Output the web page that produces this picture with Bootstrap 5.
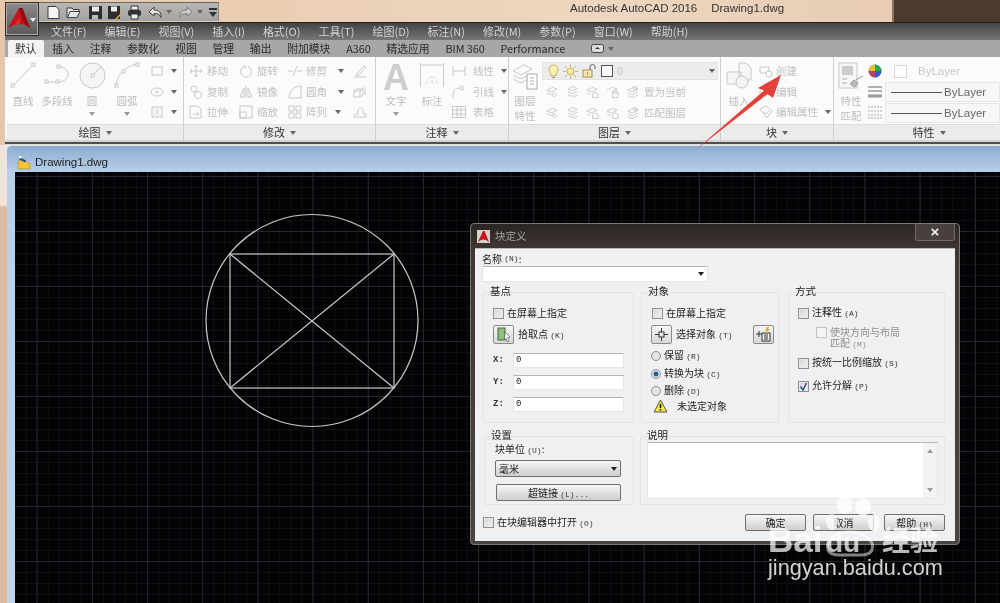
<!doctype html>
<html lang="zh">
<head>
<meta charset="utf-8">
<title>AutoCAD 2016 块定义</title>
<link href="https://cdn.jsdelivr.net/npm/bootstrap@5.3.0/dist/css/bootstrap.min.css" rel="stylesheet">
<style>
html,body{margin:0;height:603px;overflow:hidden;background:#000}
.cad{width:1000px;height:603px;position:relative;overflow:hidden;background:#e6c6aa;font-family:"Noto Sans CJK SC","Liberation Sans",sans-serif;font-size:11px;line-height:14px;filter:blur(.4px)}
.defs{width:0;height:0;position:absolute}
.topbar{height:22px;background:linear-gradient(90deg,#e8c7aa,#ecd3bb 45%,#eed6c0 60%,#e8cdb4 88%)}
.qat{flex:none;margin:2px 0 1px 38px;width:181px;background:linear-gradient(#b9b6b3,#a5a3a1);border-top:1px solid #666;border-right:1px solid #888;padding-left:8px;color:#3c3c3c}
.qat svg{display:block;flex:none;width:15px;height:15px}
.qg3{margin-left:3px}.qg4{margin-left:4px}.qg5{margin-left:5px}.qg6{margin-left:6px}.qg7{margin-left:7px}
.wintitle{color:#333;margin-left:351px;font-size:11.5px;gap:14px;font-family:"Liberation Sans","Noto Sans",sans-serif;padding-top:1px;white-space:nowrap}
.darkend{flex:none;width:108px;margin-left:auto;background:#4b3a2d;border-left:2px solid #8d7660}
.appbtn{position:absolute;left:5px;top:2px;width:34px;height:34px;background:linear-gradient(#8a8a8a,#5a5a5a);border:1px solid #2f2f2f;box-shadow:inset 0 0 0 1px #a9a9a9}
.tri{display:inline-block;flex:none;width:0;height:0;border-left:3px solid transparent;border-right:3px solid transparent;border-top:4px solid #666}
.tri.lt{border-top-color:#999}
.tri.wh{border-top-color:#eee;border-left-width:3.5px;border-right-width:3.5px;position:absolute;left:24px;top:15px}
.menurow{height:18px;margin-left:5px;background:linear-gradient(#434343,#767676);border-top:1px solid #222;padding-left:46px;gap:18px;color:#d4d4d4;line-height:17px}
.tabrow{height:17px;margin-left:5px;background:#a7a7a7;padding-left:10px;gap:15.750px;color:#2b2b2b;line-height:17px;font-size:10.8px}
.tabon{background:#f3f3f3;margin-left:-7px;margin-right:-7px;padding:0 7px;border-radius:2px 2px 0 0}
.tabico{margin-left:10px}
.ribbon{height:83px;margin-left:5px;padding-left:2px;background:#fbfbfb}
.pan{border-right:1px solid #cfcfcf;height:83px}
.p1{width:177px}.p2{width:192px}.p3{width:133px}.p4{width:212px}.p5{width:113px}.p6{flex:1;border-right:0}
.panbody{height:67px;padding-top:4px;color:#bdbdbd;font-size:10.5px}
.panfoot{height:16px;background:#ebebeb;border-top:1px solid #dedede;color:#333;gap:5px;font-size:11px;line-height:15px}
.bt{flex:none;height:63px}
.w32{width:32px}.w34{width:34px}.w36{width:36px}.w40{width:40px}
.bticon{height:32px;color:#c8c8c8}
.bticon svg{display:block;margin-top:1px}
.btlab{height:15px;line-height:15px;white-space:nowrap}
.btlab2{line-height:15px;text-align:center}
.bigA{font:700 36px/30px "Liberation Sans",sans-serif;color:#cdcdcd;padding-top:2px}
.sc{flex:none}
.sr{height:20.5px;white-space:nowrap;color:#bfbfbf}
.sr svg{flex:none;width:14px;height:14px;color:#c8c8c8}
.g4{gap:4px}.g3{gap:3px}.g7{gap:7px}
.c49{width:49px}.c50{width:50px}.c65{width:65px}
.pl5{padding-left:5px}.pl4{padding-left:4px}.pl2{padding-left:2px}
.ml11{margin-left:7px}
.laycol{width:176px;margin-left:1px}
.laydd{height:18px;margin:1px 0 2px;background:#ececec;border:1px solid #e2e2e2;padding:0 2px 0 5px;gap:4px;color:#c4c4c4}
.laydd svg{display:block}
.yr{height:20.5px;padding-left:4px;color:#bfbfbf}
.yr svg{width:13px;height:14px;flex:none;color:#c8c8c8}
.yr span{margin-left:-2px;white-space:nowrap}
.prop{flex:1;margin-left:3px}
.propr{height:20px;background:#f7f7f7;border:1px solid #e6e6e6;margin-bottom:1px;padding-left:5px;color:#666;font:11.5px/18px "Liberation Sans",sans-serif;white-space:nowrap}
.propr.flat{background:#fbfbfb;border-color:transparent;color:#c6c6c6;padding-left:8px}
.swatch{width:13px;height:13px;background:#fff;border:1px solid #d8d8d8;margin-right:11px}
.ll{width:51px;height:1px;background:#555;flex:none;margin-right:2px}
.sep{height:5px;margin-left:5px;background:linear-gradient(#d4d4d4 0,#d4d4d4 2px,#4e4e4e 2px,#4e4e4e 4px,#ddd 4px)}
.doc{height:458px;padding-left:7px;background:linear-gradient(#efe4dc 0,#efe4dc 60px,#ddbba1 62px)}
.docframe{height:100%;background:linear-gradient(#8eadd1,#b9d0e8 27px,#c0d5ea);border-top-left-radius:5px;border-top:1px solid #dfe7ee;padding-top:2px}
.doctitle{height:24px;padding:4px 0 0 10px;gap:4px;color:#222;font:11.5px/20px "Liberation Sans",sans-serif}
.space{margin-left:8px;height:431px;position:relative;overflow:hidden;background-color:#030305;background-image:linear-gradient(#25252b 1px,transparent 1px),linear-gradient(90deg,#25252b 1px,transparent 1px),linear-gradient(#0f0f13 1px,transparent 1px),linear-gradient(90deg,#0f0f13 1px,transparent 1px);background-size:100% 55px,55.2px 100%,100% 11px,11.04px 100%;background-position:0 4px,21.7px 0,0 4px,21.7px 0}
.geom{position:absolute;left:0;top:0}
.dlg{position:absolute;left:455px;top:51px;width:490px;height:322px;border:1px solid #7d7874;border-radius:4px;background:linear-gradient(#2b2523,#3f3733 25px,#4a4540);padding:0 4px 4px;color:#222;font-size:10px;line-height:14px}
.dlghead{height:24px;color:#a7a7a7;font-size:10.5px;gap:5px;padding:0 0 0 2px}
.dlgx{width:40px;height:17px;margin:0 0 7px auto;border:1px solid #6f6a66;border-top:0;border-radius:0 0 3px 3px;color:#f2f2f2;font:700 15px/15px "Liberation Sans",sans-serif;text-align:center;background:#47403c}
.dlgbody{height:293px;background:#f0f0f2;border-top:1px solid #bdb9b6;padding:3px 10px 0 7px}
.fld{height:16px;width:226px;background:#fff;border:1px solid #e4e4e4;border-top-color:#b5b5b5;padding-right:3px}
.tri.dk{border-top-color:#222}
.gbox{flex:none;border:1px solid #e4e4e6;border-radius:2px;padding:0 0 0 9px}
.gb1{width:151px;height:131px}.gb2{width:138px;height:131px;margin-left:7px}.gb3{width:157px;height:131px;margin-left:9px}
.gb4{width:150px;height:69px}.gb5{width:305px;height:69px;margin-left:6px}
.rowa{margin:10px 0 0 1px}.rowb{margin:13px 0 0 2px}.rowz{margin:9px 0 0 1px}
.gtitle{margin:-9px 0 0 -3px;height:15px;font-size:10.5px;color:#222}
.hk{font:8px/14px "Liberation Mono",monospace;color:#333}
.chkrow{height:14px;gap:3px;white-space:nowrap}
.first{margin-top:7px}
.chk{flex:none;width:11px;height:11px;background:linear-gradient(135deg,#d5d5d5,#f2f2f2);border:1px solid #8f8f8f;box-shadow:inset 0 0 0 1px #e8e8e8;display:block}
.chk.ck{display:flex}
.rad{flex:none;width:10px;height:10px;border-radius:50%;background:#e6e6e6;border:1px solid #8f8f8f;display:block}
.radon{background:radial-gradient(circle,#1d5f9e 0,#1d5f9e 2px,#dfe8f0 3px)}
.pick{flex:none;width:21px;height:19px;background:linear-gradient(#f6f6f6,#d8d8d8);border:1px solid #8a8a8a;border-radius:2px;display:flex;align-items:center;justify-content:center}
.pickrow{margin:5px 0;height:19px}
.indent1{padding-left:1px}
.xyz{height:22px}
.xyzl{width:20px;font:700 9px/14px "Liberation Mono",monospace;color:#333}
.xyzf{width:111px;height:15px;background:#fff;border:1px solid #e6e6e6;border-top-color:#b5b5b5;padding-left:2px;font:9px/13px "Liberation Mono",monospace;color:#222}
.dim{color:#8f8f8f}.dim .hk{color:#8f8f8f}
.chk.dimc{border-color:#c4c4c4;background:#f4f4f4;box-shadow:none}
.sub{margin:7px 0 0 18px;height:22px;gap:3px}
.subt{line-height:10.500px;white-space:nowrap}
.rowc{margin-top:7px}.rowd{margin-top:9px}
.rada{margin-top:5px}.radb{margin-top:4px}.radc{margin-top:3px}
.warn{margin:0 0 0 2px;gap:9px;height:15px;white-space:nowrap}
.graybtn{background:linear-gradient(#f6f6f6,#cfcfcf);border:1px solid #6f6f6f;border-radius:2px;height:17px;line-height:15px}
.unitlab{margin:-1px 0 0 1px}
.unitsel{width:126px;padding:0 3px;margin:2px 0 0 1px}
.linkb{width:125px;margin:7px 0 0 2px;text-align:center}
.ta{width:291px;height:57px;margin:-1px 0 0 -3px;background:#fff;border:1px solid #e6e6e6;border-top-color:#b5b5b5}
.tabar{width:14px;background:#f2f2f2;margin-left:auto;height:100%;padding:6px 0}
.tri.up{border-top:0;border-bottom:4px solid #999}
.okrow{gap:7px}
.okb{width:61px;height:17px;text-align:center}
.helpb{margin-left:3px}
.wmk{position:absolute;left:0;top:0;pointer-events:none}
</style>
</head>
<body>
<svg class="defs" aria-hidden="true">
<defs>
<g id="i-rect"><rect x="2" y="3" width="10" height="8" fill="none" stroke="currentColor"/><path d="M2 3h1M12 3h1M2 11h1" stroke="currentColor"/></g>
<g id="i-ell"><ellipse cx="7" cy="7" rx="6" ry="4" fill="none" stroke="currentColor"/><circle cx="7" cy="7" r="1" fill="none" stroke="currentColor"/></g>
<g id="i-hatch"><rect x="2" y="2" width="10" height="10" fill="none" stroke="currentColor"/><path d="M2 2l10 10M12 2L2 12M7 2v10" stroke="currentColor" stroke-width=".6"/></g>
<g id="i-layer"><path d="M1 5l6-3 5 2-6 3zM1 8l5 2 2-1" fill="none" stroke="currentColor"/><path d="M9 8c2.500 0 2.500 4 0 4s-2.500-4 0-4" fill="none" stroke="currentColor"/></g>
<g id="i-layer2"><path d="M2 4l5-3 5 2-5 3zM2 7l5 2 5-3M2 10l5 2 3-2" fill="none" stroke="currentColor"/><path d="M9 13l4-3" stroke="currentColor"/></g>
<g id="i-layer3"><path d="M1 5l6-3 5 2-6 3zM1 8l4 2" fill="none" stroke="currentColor"/><path d="M7 13V9l3-2 3 2v4z" fill="none" stroke="currentColor"/></g>
<g id="i-layer4"><path d="M1 5l6-3 5 2-6 3" fill="none" stroke="currentColor"/><rect x="7" y="8" width="6" height="5" fill="none" stroke="currentColor"/><path d="M8 8V6h4v2" fill="none" stroke="currentColor"/></g>
<g id="i-layer5"><path d="M2 5l6-3 5 2-6 3zM2 8l5 2 6-3M2 11l5 2 6-3" fill="none" stroke="currentColor"/><circle cx="10" cy="3" r="2" fill="none" stroke="currentColor"/></g>
</defs>
</svg>
<div class="cad">
  <div class="topbar d-flex">
    <div class="qat d-flex align-items-center">
      <svg viewBox="0 0 15 15"><path d="M2 1.500h8l3 3v9H2z" fill="#f4f4f4" stroke="#3c3c3c"/></svg>
      <svg class="qg5" viewBox="0 0 15 15"><path d="M1 3h5l1 1.500h6v2H4l-2.500 6H1zM4 6.500h10l-3 6H1.500" fill="#e8e8e8" stroke="#3c3c3c"/></svg>
      <svg class="qg7" viewBox="0 0 15 15"><path d="M1 1h13v13H1z" fill="#2d2d2d"/><path d="M4 1.500h7v5H4z" fill="#eee"/><path d="M4 10h6v4H4z" fill="#bbb"/></svg>
      <svg class="qg4" viewBox="0 0 15 15"><path d="M1 1h12v13H1z" fill="#2d2d2d"/><path d="M4 1.500h6v5H4z" fill="#eee"/><path d="M8 14l6-6 1 1-6 6H8z" fill="#e2a93a"/></svg>
      <svg class="qg5" viewBox="0 0 15 15"><path d="M4 1h7v4H4z" fill="#eee" stroke="#333"/><rect x="1" y="5" width="13" height="6" rx="2" fill="#333"/><path d="M4 9h7v5H4z" fill="#eee" stroke="#333"/></svg>
      <svg class="qg6" viewBox="0 0 15 15"><path d="M6 2L1 7l5 4V8.500c4 0 6 1 7 4 .5-5-2.500-7.500-7-7.500z" fill="#e6e6e6" stroke="#3c3c3c"/></svg>
      <span class="tri qg3"></span>
      <svg class="qg6" viewBox="0 0 15 15"><path d="M9 2l5 5-5 4V8.500c-4 0-6 1-7 4-.5-5 2.500-7.500 7-7.500z" fill="#cfcfcf" stroke="#7d7d7d"/></svg>
      <span class="tri qg4"></span>
      <svg class="qg3" viewBox="0 0 15 15"><path d="M3 3h8v2H3z" fill="#333"/><path d="M3 7h8l-4 5z" fill="#333"/></svg>
    </div>
    <div class="wintitle d-flex"><span>Autodesk AutoCAD 2016</span><span>Drawing1.dwg</span></div>
    <div class="darkend"></div>
  </div>

  <div class="appbtn">
    <svg width="32" height="32" viewBox="0 0 32 32"><path d="M2 25L13 5h3.500L24 25l-4.500-3-5.500-1-6 1z" fill="#c5151b"/><path d="M13 5h3.500L24 25l-4.500-3-4-8z" fill="#8f0f14"/><path d="M8 22l5.500-7.500L14 21z" fill="#e32a2e"/></svg>
    <span class="tri wh"></span>
  </div>

  <div class="menurow d-flex">
    <span>文件(F)</span><span>编辑(E)</span><span>视图(V)</span><span>插入(I)</span><span>格式(O)</span><span>工具(T)</span><span>绘图(D)</span><span>标注(N)</span><span>修改(M)</span><span>参数(P)</span><span>窗口(W)</span><span>帮助(H)</span>
  </div>

  <div class="tabrow d-flex">
    <span class="tabon">默认</span><span>插入</span><span>注释</span><span>参数化</span><span>视图</span><span>管理</span><span>输出</span><span>附加模块</span><span>A360</span><span>精选应用</span><span>BIM 360</span><span>Performance</span>
    <span class="d-flex align-items-center gap-1 tabico"><svg width="13" height="9" viewBox="0 0 13 9"><rect x=".5" y=".5" width="12" height="8" rx="2" fill="#ddd" stroke="#444"/><path d="M4 5h5L6.500 3z" fill="#333"/></svg><span class="tri"></span></span>
  </div>

  <div class="ribbon d-flex">
    <section class="pan p1">
      <div class="panbody d-flex">
        <div class="bt w32 d-flex flex-column align-items-center"><div class="bticon"><svg width="26" height="26" viewBox="0 0 26 26"><path d="M3 24L23 3" stroke="currentColor" fill="none"/><rect x="1" y="22" width="3" height="3" fill="#fff" stroke="currentColor"/><rect x="22" y="1" width="3" height="3" fill="#fff" stroke="currentColor"/></svg></div><div class="btlab">直线</div></div>
        <div class="bt w36 d-flex flex-column align-items-center"><div class="bticon"><svg width="26" height="26" viewBox="0 0 26 26"><path d="M3 20h10c7 0 11-3 11-8s-4-7-9-7" stroke="currentColor" fill="none"/><rect x="1" y="18" width="3" height="3" fill="#fff" stroke="currentColor"/><rect x="12" y="18" width="3" height="3" fill="#fff" stroke="currentColor"/><rect x="13" y="3" width="3" height="3" fill="#fff" stroke="currentColor"/></svg></div><div class="btlab">多段线</div></div>
        <div class="bt w34 d-flex flex-column align-items-center"><div class="bticon"><svg width="27" height="27" viewBox="0 0 27 27"><circle cx="13.500" cy="13.500" r="12.500" fill="#f4f4f4" stroke="currentColor"/><path d="M13.500 13.500L22 5" stroke="currentColor"/><rect x="12" y="12" width="3" height="3" fill="#fff" stroke="currentColor"/></svg></div><div class="btlab">圆</div><span class="tri lt mt-1"></span></div>
        <div class="bt w36 d-flex flex-column align-items-center"><div class="bticon"><svg width="26" height="26" viewBox="0 0 26 26"><path d="M2 24C3 12 11 4 24 2" stroke="currentColor" fill="none"/><rect x="1" y="22" width="3" height="3" fill="#fff" stroke="currentColor"/><rect x="22" y="1" width="3" height="3" fill="#fff" stroke="currentColor"/><rect x="8" y="8" width="3" height="3" fill="#fff" stroke="currentColor"/></svg></div><div class="btlab">圆弧</div><span class="tri lt mt-1"></span></div>
        <div class="sc pl5">
          <div class="sr d-flex align-items-center g7"><svg viewBox="0 0 14 14"><use href="#i-rect"/></svg><span class="tri"></span></div>
          <div class="sr d-flex align-items-center g7"><svg viewBox="0 0 14 14"><use href="#i-ell"/></svg><span class="tri"></span></div>
          <div class="sr d-flex align-items-center g7"><svg viewBox="0 0 14 14"><use href="#i-hatch"/></svg><span class="tri"></span></div>
        </div>
      </div>
      <div class="panfoot d-flex justify-content-center align-items-center"><span>绘图</span><span class="tri"></span></div>
    </section>

    <section class="pan p2">
      <div class="panbody d-flex pl5">
        <div class="sc c50">
          <div class="sr d-flex align-items-center g4"><svg viewBox="0 0 14 14"><path d="M7 1v12M1 7h12M5 3l2-2 2 2M5 11l2 2 2-2M3 5L1 7l2 2M11 5l2 2-2 2" fill="none" stroke="currentColor"/></svg><span>移动</span></div>
          <div class="sr d-flex align-items-center g4"><svg viewBox="0 0 14 14"><circle cx="5" cy="4" r="3" fill="none" stroke="currentColor"/><circle cx="9" cy="10" r="3.500" fill="none" stroke="currentColor"/></svg><span>复制</span></div>
          <div class="sr d-flex align-items-center g4"><svg viewBox="0 0 14 14"><path d="M1 1h8l3 3v9H1z" fill="none" stroke="currentColor"/><path d="M4 9h6M8 7l2 2-2 2" fill="none" stroke="currentColor"/></svg><span>拉伸</span></div>
        </div>
        <div class="sc c49">
          <div class="sr d-flex align-items-center g4"><svg viewBox="0 0 14 14"><path d="M9 2.500a5.500 5.500 0 1 1-4 0" fill="none" stroke="currentColor"/><path d="M5 1l2 2-2 1" fill="none" stroke="currentColor"/></svg><span>旋转</span></div>
          <div class="sr d-flex align-items-center g4"><svg viewBox="0 0 14 14"><path d="M7 1v12M5 3L1 12h4zM9 3l4 9H9z" fill="none" stroke="currentColor"/></svg><span>镜像</span></div>
          <div class="sr d-flex align-items-center g4"><svg viewBox="0 0 14 14"><rect x="1" y="1" width="12" height="12" fill="none" stroke="currentColor"/><rect x="1" y="7" width="6" height="6" fill="none" stroke="currentColor"/></svg><span>缩放</span></div>
        </div>
        <div class="sc c65">
          <div class="sr d-flex align-items-center g4"><svg viewBox="0 0 14 14"><path d="M0 7h5M9 7h5M9 2L5 12" fill="none" stroke="currentColor"/></svg><span>修剪</span><span class="tri ml11"></span></div>
          <div class="sr d-flex align-items-center g4"><svg viewBox="0 0 14 14"><path d="M1 13C1 6 6 1 13 1v12z" fill="none" stroke="currentColor"/></svg><span>圆角</span><span class="tri ml11"></span></div>
          <div class="sr d-flex align-items-center g4"><svg viewBox="0 0 14 14"><path d="M1 1h5v5H1zM8 1h5v5H8zM1 8h5v5H1zM8 8h5v5H8z" fill="none" stroke="currentColor"/></svg><span>阵列</span><span class="tri ms-1"></span></div>
        </div>
        <div class="sc">
          <div class="sr d-flex align-items-center"><svg viewBox="0 0 14 14"><path d="M3 11L11 2l2 1-8 9zM1 13h12" fill="none" stroke="currentColor"/></svg></div>
          <div class="sr d-flex align-items-center"><svg viewBox="0 0 14 14"><path d="M1 6l3-2h6l-3 2zM1 6v6h6V6M10 4v6l-3 2M12 2v8" fill="none" stroke="currentColor"/></svg></div>
          <div class="sr d-flex align-items-center"><svg viewBox="0 0 14 14"><path d="M1 12h12v-3h-3V6C10 2 5 2 5 6v3H2z" fill="none" stroke="currentColor"/></svg></div>
        </div>
      </div>
      <div class="panfoot d-flex justify-content-center align-items-center"><span>修改</span><span class="tri"></span></div>
    </section>

    <section class="pan p3">
      <div class="panbody d-flex">
        <div class="bt w40 d-flex flex-column align-items-center"><div class="bticon bigA">A</div><div class="btlab">文字</div><span class="tri lt mt-1"></span></div>
        <div class="bt w32 d-flex flex-column align-items-center"><div class="bticon"><svg width="24" height="26" viewBox="0 0 24 26"><path d="M.5 1v24M23.500 1v24M1 3h22" stroke="currentColor" fill="none"/><path d="M6 22l2-3M9 17l3-3 3 3M16 19l2 3M12 18v4" stroke="currentColor" stroke-dasharray="2 1" fill="none"/></svg></div><div class="btlab">标注</div></div>
        <div class="sc pl4">
          <div class="sr d-flex align-items-center g3"><svg viewBox="0 0 14 14"><path d="M1 2v10M13 2v10M1 7h12" fill="none" stroke="currentColor"/></svg><span class="ms-1">线性</span><span class="tri ms-1"></span></div>
          <div class="sr d-flex align-items-center g3"><svg viewBox="0 0 14 14"><path d="M1 13v-3c0-5 4-7 7-7" fill="none" stroke="currentColor"/><circle cx="10" cy="3" r="2" fill="none" stroke="currentColor"/></svg><span class="ms-1">引线</span><span class="tri ms-1"></span></div>
          <div class="sr d-flex align-items-center g3"><svg viewBox="0 0 14 14"><path d="M.5 1.500h13v11H.5zM.5 5h13M.5 9h13M5 1.500v11M9 1.500v11" fill="none" stroke="currentColor"/></svg><span class="ms-1">表格</span></div>
        </div>
      </div>
      <div class="panfoot d-flex justify-content-center align-items-center"><span>注释</span><span class="tri"></span></div>
    </section>

    <section class="pan p4">
      <div class="panbody d-flex">
        <div class="bt w32 d-flex flex-column align-items-center"><div class="bticon"><svg width="26" height="30" viewBox="0 0 26 30"><path d="M1 9l11-6 8 4-11 6zM1 13l8 4 7-4M1 17l8 4 7-4" fill="none" stroke="currentColor"/><rect x="15" y="12" width="10" height="15" fill="#fff" stroke="#aaa"/><path d="M18 16h4M18 19h4M18 22h4" stroke="#aaa"/></svg></div><div class="btlab2">图层<br>特性</div></div>
        <div class="laycol">
          <div class="laydd d-flex align-items-center">
            <svg width="11" height="15" viewBox="0 0 11 15"><path d="M5.500 1a4.500 4.500 0 0 1 3 8L8 12H3l-.5-3a4.500 4.500 0 0 1 3-8z" fill="#fbeeb0" stroke="#c6b468"/><path d="M4 13.500h3" stroke="#999"/></svg>
            <svg width="15" height="15" viewBox="0 0 15 15"><circle cx="7.500" cy="7.500" r="3.500" fill="#fbe9a0" stroke="#c6b468"/><path d="M7.500 0v3M7.500 12v3M0 7.500h3M12 7.500h3M2 2l2 2M11 11l2 2M2 13l2-2M11 4l2-2" stroke="#c6b468"/></svg>
            <svg width="15" height="14" viewBox="0 0 15 14"><rect x="1" y="6" width="9" height="7" fill="#f6e6b0" stroke="#a58f50"/><path d="M8 6V3a2.500 2.500 0 0 1 5 0v2" fill="none" stroke="#666"/><path d="M5.500 8v3" stroke="#a58f50"/></svg>
            <svg width="12" height="12" viewBox="0 0 12 12"><rect x=".5" y=".5" width="11" height="11" fill="#fafafa" stroke="#555"/></svg>
            <span>0</span>
            <span class="tri ms-auto"></span>
          </div>
          <div class="yr d-flex align-items-center g7">
            <svg viewBox="0 0 14 14"><use href="#i-layer"/></svg><svg viewBox="0 0 14 14"><use href="#i-layer2"/></svg><svg viewBox="0 0 14 14"><use href="#i-layer3"/></svg><svg viewBox="0 0 14 14"><use href="#i-layer4"/></svg><svg viewBox="0 0 14 14"><use href="#i-layer5"/></svg><span>置为当前</span>
          </div>
          <div class="yr d-flex align-items-center g7">
            <svg viewBox="0 0 14 14"><use href="#i-layer"/></svg><svg viewBox="0 0 14 14"><use href="#i-layer2"/></svg><svg viewBox="0 0 14 14"><use href="#i-layer3"/></svg><svg viewBox="0 0 14 14"><use href="#i-layer3"/></svg><svg viewBox="0 0 14 14"><use href="#i-layer5"/></svg><span>匹配图层</span>
          </div>
        </div>
      </div>
      <div class="panfoot d-flex justify-content-center align-items-center"><span>图层</span><span class="tri"></span></div>
    </section>

    <section class="pan p5">
      <div class="panbody d-flex">
        <div class="bt w36 d-flex flex-column align-items-center"><div class="bticon"><svg width="27" height="28" viewBox="0 0 27 28"><path d="M13 1h7l5 5v12H13zM1 10h14v12H1z" fill="#f6f6f6" stroke="currentColor"/><circle cx="16" cy="20" r="6" fill="#f4f4f4" stroke="currentColor"/></svg></div><div class="btlab">插入</div></div>
        <div class="sc pl2">
          <div class="sr d-flex align-items-center g3"><svg viewBox="0 0 14 14"><path d="M1 3h9v6H1z" fill="none" stroke="currentColor"/><circle cx="10" cy="10" r="3" fill="#fff" stroke="currentColor"/></svg><span>创建</span></div>
          <div class="sr d-flex align-items-center g3"><svg viewBox="0 0 14 14"><path d="M1 3h9v6H1z" fill="none" stroke="currentColor"/><path d="M6 12l6-6" stroke="currentColor"/></svg><span>编辑</span></div>
          <div class="sr d-flex align-items-center g3"><svg viewBox="0 0 14 14"><path d="M1 4l6-3 6 5-5 7zM4 7l3 2 3-3" fill="none" stroke="currentColor"/></svg><span>编辑属性</span><span class="tri ms-1"></span></div>
        </div>
      </div>
      <div class="panfoot d-flex justify-content-center align-items-center"><span>块</span><span class="tri"></span></div>
    </section>

    <section class="pan p6">
      <div class="panbody d-flex">
        <div class="bt w34 d-flex flex-column align-items-center"><div class="bticon"><svg width="26" height="28" viewBox="0 0 26 28"><rect x="1" y="1" width="18" height="25" fill="#f6f6f6" stroke="currentColor"/><rect x="4" y="4" width="11" height="9" fill="#ccc"/><path d="M4 17h5M4 21h5" stroke="#aaa"/><path d="M12 22l4-4 4 3-3 4zM18 18l7-4" stroke="#999" fill="#bbb"/></svg></div><div class="btlab2">特性<br>匹配</div></div>
        <div class="sc">
          <div class="sr d-flex align-items-center"><svg viewBox="0 0 14 14"><circle cx="7" cy="7" r="6.500" fill="#888"/><path d="M7 7L7 .5A6.500 6.500 0 0 1 13.500 7z" fill="#2ba84a"/><path d="M7 7H.5A6.500 6.500 0 0 1 7 .5z" fill="#e2c132"/><path d="M7 7h6.500A6.500 6.500 0 0 1 7 13.500z" fill="#2e5fc0"/><path d="M7 7v6.500A6.500 6.500 0 0 1 .5 7z" fill="#c83a6a"/></svg></div>
          <div class="sr d-flex align-items-center"><svg viewBox="0 0 14 14"><path d="M0 2h14M0 6h14" stroke="#999" stroke-width="1.500"/><path d="M0 11h14" stroke="#999" stroke-width="3"/></svg></div>
          <div class="sr d-flex align-items-center"><svg viewBox="0 0 14 14"><path d="M0 2h14M0 6h14M0 10h14M0 13h14" stroke="#aaa" stroke-dasharray="2 1"/></svg></div>
        </div>
        <div class="prop">
          <div class="propr flat d-flex align-items-center"><span class="swatch"></span><span>ByLayer</span></div>
          <div class="propr d-flex align-items-center"><span class="ll"></span><span>ByLayer</span></div>
          <div class="propr d-flex align-items-center"><span class="ll"></span><span>ByLayer</span></div>
        </div>
      </div>
      <div class="panfoot d-flex justify-content-center align-items-center ps-4"><span>特性</span><span class="tri"></span></div>
    </section>
  </div>

  <div class="sep"></div>

  <div class="doc">
    <div class="docframe">
      <div class="doctitle d-flex align-items-center">
        <svg width="14" height="15" viewBox="0 0 13 14"><path d="M1 13V6l3-2 8 4v5z" fill="#f2c531" stroke="#a8842a" stroke-width=".5"/><path d="M2 3l6 3" stroke="#2b4f7e" stroke-width="2"/><circle cx="3" cy="2" r="1.200" fill="#fff"/></svg>
        <span>Drawing1.dwg</span>
      </div>
      <div class="space">
        <svg class="geom" width="985" height="431" viewBox="15 172 985 431" fill="none" stroke="#c8c8c8" stroke-width="1.200"><circle cx="312" cy="320.500" r="106"/><rect x="230" y="254" width="164" height="134"/><path d="M230 254L394 388M394 254L230 388"/></svg>

        <div class="dlg">
          <div class="dlghead d-flex align-items-center">
            <svg width="13" height="13" viewBox="0 0 13 13"><rect width="13" height="13" fill="#d8d2cc"/><path d="M1 12L6 1h1.500L12 12l-3-2-3-.5-2 .5z" fill="#c5151b"/></svg>
            <span>块定义</span>
            <div class="dlgx">×</div>
          </div>
          <div class="dlgbody">
            <div class="d-flex align-items-center">名称&nbsp;<span class="hk">(N)</span>:</div>
            <div class="fld d-flex align-items-center justify-content-end"><span class="tri dk"></span></div>

            <div class="d-flex rowa">
              <div class="gbox gb1">
                <div class="gtitle">基点</div>
                <div class="chkrow d-flex align-items-center first"><span class="chk"></span><span>在屏幕上指定</span></div>
                <div class="d-flex align-items-center gap-1 pickrow">
                  <span class="pick"><svg width="15" height="15" viewBox="0 0 15 15"><rect x="2" y="1" width="7" height="12" fill="#8fbf7a" stroke="#3b6a3b"/><path d="M9 5l5 5-2.500.5L13 14l-2 .5-1-3-1.500 1.500z" fill="#fff" stroke="#555" stroke-width=".7"/></svg></span>
                  <span>拾取点&nbsp;<span class="hk">(K)</span></span>
                </div>
                <div class="xyz d-flex align-items-center"><span class="xyzl">X:</span><span class="xyzf">0</span></div>
                <div class="xyz d-flex align-items-center"><span class="xyzl">Y:</span><span class="xyzf">0</span></div>
                <div class="xyz d-flex align-items-center"><span class="xyzl">Z:</span><span class="xyzf">0</span></div>
              </div>
              <div class="gbox gb2">
                <div class="gtitle">对象</div>
                <div class="chkrow d-flex align-items-center first indent1"><span class="chk"></span><span>在屏幕上指定</span></div>
                <div class="d-flex align-items-center gap-1 pickrow">
                  <span class="pick"><svg width="15" height="15" viewBox="0 0 15 15"><rect x="5" y="5" width="5" height="5" fill="none" stroke="#333"/><path d="M1 7.500h4M10 7.500h4M7.500 1v4M7.500 10v4" stroke="#333"/></svg></span>
                  <span class="text-nowrap">选择对象&nbsp;<span class="hk">(T)</span></span>
                  <span class="pick ms-auto me-1"><svg width="15" height="15" viewBox="0 0 15 15"><path d="M0 7h6M3 4v6" stroke="#333"/><rect x="6" y="6" width="8" height="8" fill="#eee" stroke="#333"/><path d="M8 8h4M8 10h4M8 12h4" stroke="#333"/><path d="M11 0l-2 4h2l-1 2 4-4h-2l1-2z" fill="#e8a92a"/></svg></span>
                </div>
                <div class="chkrow d-flex align-items-center rada"><span class="rad"></span><span>保留&nbsp;<span class="hk">(R)</span></span></div>
                <div class="chkrow d-flex align-items-center radb"><span class="rad radon"></span><span>转换为块&nbsp;<span class="hk">(C)</span></span></div>
                <div class="chkrow d-flex align-items-center radc"><span class="rad"></span><span>删除&nbsp;<span class="hk">(D)</span></span></div>
                <div class="d-flex align-items-center warn"><svg width="15" height="14" viewBox="0 0 15 14"><path d="M7.500 1L14 13H1z" fill="#f6e54a" stroke="#555"/><path d="M7.500 5v4M7.500 10v1.500" stroke="#111" stroke-width="1.500"/></svg><span>未选定对象</span></div>
              </div>
              <div class="gbox gb3">
                <div class="gtitle">方式</div>
                <div class="chkrow d-flex align-items-center first"><span class="chk"></span><span>注释性&nbsp;<span class="hk">(A)</span></span></div>
                <div class="d-flex sub dim"><span class="chk dimc"></span><span class="subt">使块方向与布局<br>匹配&nbsp;<span class="hk">(M)</span></span></div>
                <div class="chkrow d-flex align-items-center rowc"><span class="chk"></span><span>按统一比例缩放&nbsp;<span class="hk">(S)</span></span></div>
                <div class="chkrow d-flex align-items-center rowd"><span class="chk ck align-items-center justify-content-center"><svg width="9" height="9" viewBox="0 0 9 9"><path d="M1.500 4.500L4 8l3.500-7" fill="none" stroke="#2b4f8e" stroke-width="1.500"/></svg></span><span>允许分解&nbsp;<span class="hk">(P)</span></span></div>
              </div>
            </div>

            <div class="d-flex rowb">
              <div class="gbox gb4">
                <div class="gtitle">设置</div>
                <div class="unitlab">块单位&nbsp;<span class="hk">(U)</span>:</div>
                <div class="graybtn unitsel d-flex align-items-center justify-content-between"><span>毫米</span><span class="tri dk"></span></div>
                <div class="graybtn linkb">超链接&nbsp;<span class="hk">(L)...</span></div>
              </div>
              <div class="gbox gb5">
                <div class="gtitle">说明</div>
                <div class="ta d-flex"><div class="tabar d-flex flex-column justify-content-between align-items-center"><span class="tri up"></span><span class="tri lt"></span></div></div>
              </div>
            </div>

            <div class="d-flex align-items-center rowz">
              <div class="chkrow d-flex align-items-center"><span class="chk"></span><span>在块编辑器中打开&nbsp;<span class="hk">(O)</span></span></div>
              <div class="d-flex ms-auto okrow">
                <div class="graybtn okb">确定</div>
                <div class="graybtn okb">取消</div>
                <div class="graybtn okb helpb">帮助&nbsp;<span class="hk">(H)</span></div>
              </div>
            </div>
          </div>
        </div>
      </div>
    </div>
  </div>

  <svg class="wmk" width="1000" height="603" viewBox="0 0 1000 603">
    <path d="M781 75L773 98l-5.500-4L695 150.500 764 90.500 758 88z" fill="#e5403c"/>
    <g fill="#fff" fill-opacity=".72">
      <ellipse cx="845" cy="505" rx="8" ry="9"/><ellipse cx="863" cy="507" rx="8" ry="9"/>
      <ellipse cx="832" cy="522" rx="6" ry="8"/><ellipse cx="874" cy="523" rx="6" ry="8"/>
      <text x="768" y="552" font-family="Liberation Sans" font-weight="700" font-size="35">Bai</text>
      <text x="826" y="552" font-family="Liberation Sans" font-weight="700" font-size="28">du</text>
      <text x="882" y="551" font-family="Noto Sans CJK SC" font-weight="700" font-size="28">经验</text>
    </g>
    <path d="M828 550c-3-10 8-18 22-18s25 8 22 18c-3 6-11 5-22 5s-19 1-22-5z" fill="none" stroke="#fff" stroke-opacity=".5" stroke-width="3"/>
    <text x="768" y="575" font-family="Liberation Sans" font-size="21.700" fill="#fff" fill-opacity=".82">jingyan.baidu.com</text>
  </svg>
</div>
<script src="https://cdn.jsdelivr.net/npm/bootstrap@5.3.0/dist/js/bootstrap.bundle.min.js"></script>
</body>
</html>
